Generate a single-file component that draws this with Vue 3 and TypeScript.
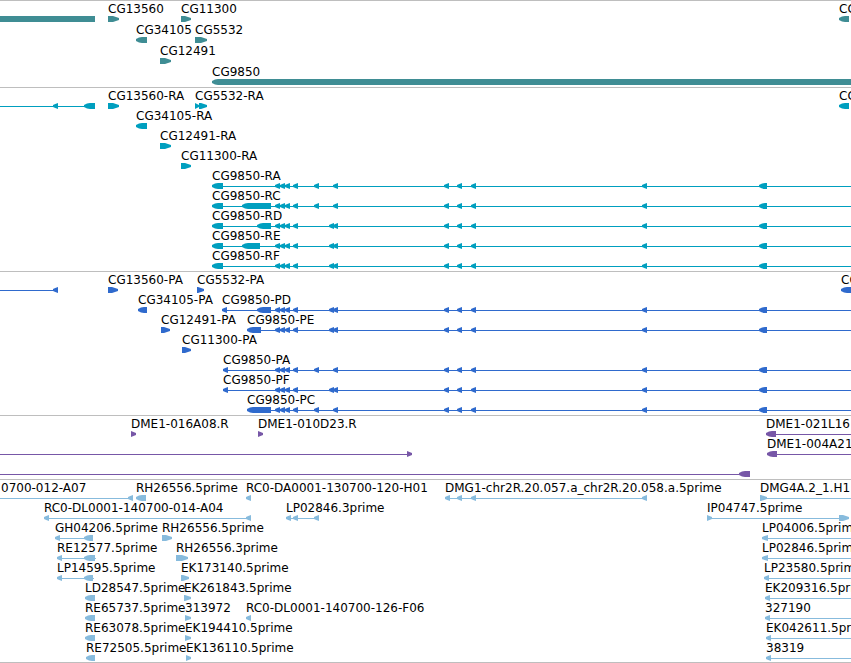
<script setup lang="ts">
type Kind = 'left' | 'right' | 'box'
type Shape = [kind: Kind, start: number, end: number]
type Label = [x: number, text: string]

interface Row {
  labels: Label[]
  lines?: [number, number][]
  shapes: Shape[]
}

interface Track {
  name: string
  color: string
  pitch: number
  rows: Row[]
}

// Features running past the visible region end here.
const FAR = 4000

const L = (start: number, end: number): Shape => ['left', start, end]
const R = (start: number, end: number): Shape => ['right', start, end]
const B = (start: number, end: number): Shape => ['box', start, end]

const shared: Shape[] = [
  L(275, 280), L(280, 285), L(285, 290), L(293, 298),
  L(444, 449), L(457, 462), L(471, 476), L(642, 647), L(759, 767),
]
const spaced: Shape[] = [...shared, L(314, 319), L(333, 338)]
const paired: Shape[] = [...shared, L(329, 334), L(333, 338)]

const tracks: Track[] = [
  {
    name: 'genes',
    color: '#3f8d94',
    pitch: 21,
    rows: [
      { labels: [[108, 'CG13560'], [181, 'CG11300'], [839, 'CG']], shapes: [B(0, 95), R(108, 119), R(181, 191), L(839, 849)] },
      { labels: [[136, 'CG34105'], [195, 'CG5532']], shapes: [L(136, 147), R(195, 207)] },
      { labels: [[160, 'CG12491']], shapes: [R(160, 171)] },
      { labels: [[212, 'CG9850']], shapes: [L(212, FAR)] },
    ],
  },
  {
    name: 'transcripts',
    color: '#009fbf',
    pitch: 20,
    rows: [
      {
        labels: [[108, 'CG13560-RA'], [195, 'CG5532-RA'], [839, 'CG']],
        lines: [[0, 95]],
        shapes: [L(53, 58), L(84, 95), R(108, 119), R(195, 199), R(199, 207), L(839, 849)],
      },
      { labels: [[136, 'CG34105-RA']], shapes: [L(136, 147)] },
      { labels: [[160, 'CG12491-RA']], shapes: [R(160, 171)] },
      { labels: [[181, 'CG11300-RA']], shapes: [R(181, 191)] },
      { labels: [[212, 'CG9850-RA']], lines: [[212, FAR]], shapes: [L(212, 223), ...spaced] },
      { labels: [[212, 'CG9850-RC']], lines: [[212, FAR]], shapes: [L(212, 223), L(242, 271), ...spaced] },
      { labels: [[212, 'CG9850-RD']], lines: [[212, FAR]], shapes: [L(212, 223), L(257, 271), ...paired] },
      { labels: [[212, 'CG9850-RE']], lines: [[212, FAR]], shapes: [L(212, 223), L(242, 260), ...paired] },
      { labels: [[212, 'CG9850-RF']], lines: [[212, FAR]], shapes: [L(212, 223), ...paired] },
    ],
  },
  {
    name: 'proteins',
    color: '#2f6acd',
    pitch: 20,
    rows: [
      {
        labels: [[108, 'CG13560-PA'], [197, 'CG5532-PA'], [841, 'CG']],
        lines: [[0, 58]],
        shapes: [L(53, 58), R(108, 118), R(197, 204), L(841, 851)],
      },
      { labels: [[138, 'CG34105-PA'], [222, 'CG9850-PD']], lines: [[222, FAR]], shapes: [L(138, 147), L(222, 227), L(257, 271), ...paired] },
      { labels: [[161, 'CG12491-PA'], [247, 'CG9850-PE']], lines: [[247, FAR]], shapes: [R(161, 170), L(247, 261), ...paired] },
      { labels: [[182, 'CG11300-PA']], shapes: [R(182, 191)] },
      { labels: [[223, 'CG9850-PA']], lines: [[223, FAR]], shapes: [L(223, 228), ...spaced] },
      { labels: [[223, 'CG9850-PF']], lines: [[223, FAR]], shapes: [L(223, 228), ...paired] },
      { labels: [[247, 'CG9850-PC']], lines: [[247, FAR]], shapes: [L(247, 271), ...spaced] },
    ],
  },
  {
    name: 'clones',
    color: '#7757a7',
    pitch: 20,
    rows: [
      {
        labels: [[131, 'DME1-016A08.R'], [258, 'DME1-010D23.R'], [766, 'DME1-021L16']],
        lines: [[766, FAR]],
        shapes: [R(131, 136), R(258, 263), L(766, 776)],
      },
      { labels: [[767, 'DME1-004A21']], lines: [[0, 412], [767, FAR]], shapes: [R(407, 412), L(767, 777)] },
      { labels: [], lines: [[0, 750]], shapes: [L(739, 750)] },
    ],
  },
  {
    name: 'ests',
    color: '#87bbdd',
    pitch: 20,
    rows: [
      {
        labels: [
          [1, '0700-012-A07'], [136, 'RH26556.5prime'], [246, 'RC0-DA0001-130700-120-H01'],
          [445, 'DMG1-chr2R.20.057.a_chr2R.20.058.a.5prime'], [760, 'DMG4A.2_1.H1'],
        ],
        lines: [[0, 133], [445, 647], [760, FAR]],
        shapes: [L(128, 133), L(136, 146), L(246, 251), L(445, 450), L(457, 462), L(471, 476), L(642, 647), R(760, 767)],
      },
      {
        labels: [[44, 'RC0-DL0001-140700-014-A04'], [286, 'LP02846.3prime'], [707, 'IP04747.5prime']],
        lines: [[44, 251], [286, 319], [707, 849]],
        shapes: [L(44, 49), L(246, 251), L(286, 291), L(293, 298), L(314, 319), R(707, 712), R(839, 849)],
      },
      {
        labels: [[55, 'GH04206.5prime'], [162, 'RH26556.5prime'], [762, 'LP04006.5prime']],
        lines: [[55, 93], [762, FAR]],
        shapes: [L(55, 60), L(84, 93), R(162, 172), L(762, 768)],
      },
      {
        labels: [[57, 'RE12577.5prime'], [176, 'RH26556.3prime'], [762, 'LP02846.5prime']],
        lines: [[57, 96], [762, FAR]],
        shapes: [L(57, 62), L(84, 95), R(176, 188), L(762, 768)],
      },
      {
        labels: [[57, 'LP14595.5prime'], [181, 'EK173140.5prime'], [764, 'LP23580.5prime']],
        lines: [[57, 94], [764, FAR]],
        shapes: [L(57, 62), L(84, 93), R(181, 189), L(764, 769)],
      },
      {
        labels: [[85, 'LD28547.5prime'], [184, 'EK261843.5prime'], [765, 'EK209316.5prime']],
        lines: [[765, FAR]],
        shapes: [L(85, 95), R(184, 191), L(765, 770)],
      },
      {
        labels: [[85, 'RE65737.5prime'], [185, '313972'], [246, 'RC0-DL0001-140700-126-F06'], [765, '327190']],
        lines: [[765, FAR]],
        shapes: [L(85, 95), R(185, 191), L(246, 251), L(765, 770)],
      },
      {
        labels: [[85, 'RE63078.5prime'], [185, 'EK194410.5prime'], [766, 'EK042611.5prime']],
        lines: [[766, FAR]],
        shapes: [L(85, 95), R(185, 191), L(766, 771)],
      },
      {
        labels: [[86, 'RE72505.5prime'], [186, 'EK136110.5prime'], [766, '38319']],
        lines: [[766, FAR]],
        shapes: [L(86, 95), R(186, 191), L(766, 771)],
      },
    ],
  },
]

// Outline of a feature bar, 6px tall, with a taper on its strand side.
function outline([kind, start, end]: Shape): string {
  if (kind === 'box') return `M${start} 15H${end}V21H${start}Z`
  const tip = Math.min(6, end - start)
  if (kind === 'left') {
    const neck = start + tip
    const bend = start + (end - start > 6 ? 3 : 2)
    const edge = end - start > 6 ? 15 : 16
    return `M${end} 15H${neck}Q${bend} ${edge} ${start} 17V19Q${bend} ${36 - edge} ${neck} 21H${end}Z`
  }
  const neck = end - tip
  return `M${start} 15H${neck}L${end} 17V19L${neck} 21H${start}Z`
}
</script>

<template>
  <main class="browser">
    <section v-for="track in tracks" :key="track.name" class="track" :class="track.name">
      <svg v-for="(row, i) in track.rows" :key="i" class="row" :height="track.pitch" :fill="track.color">
        <rect v-for="([from, to], n) in row.lines ?? []" :key="'l' + n" :x="from" y="18" :width="to - from" height="1" />
        <path v-for="(shape, n) in row.shapes" :key="'s' + n" :d="outline(shape)" />
        <text v-for="([x, text], n) in row.labels" :key="'t' + n" class="label" :x="x" y="12">{{ text }}</text>
      </svg>
    </section>
  </main>
</template>

<style>
body {
  margin: 0;
  background: #fff;
}
</style>

<style scoped>
.browser {
  overflow: hidden;
  border-bottom: 1px solid #bebebe;
}

.track {
  border-top: 1px solid #bebebe;
  padding-bottom: 3px;
}

.genes,
.ests {
  padding-bottom: 2px;
}

.row {
  display: block;
  width: 100%;
  overflow: visible;
}

.label {
  fill: #000;
  font-family: "DejaVu Sans", sans-serif;
  font-size: 12px;
}
</style>
